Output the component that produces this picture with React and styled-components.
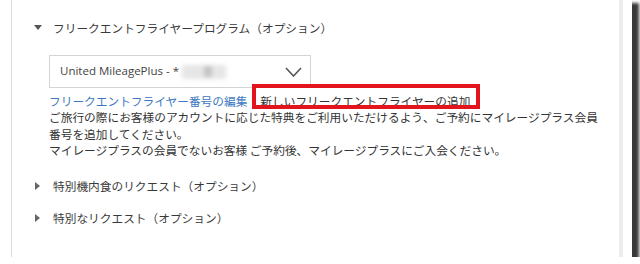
import React from "react";
import styled, { createGlobalStyle } from "styled-components";

const Global = createGlobalStyle`
  html, body { margin: 0; padding: 0; background: #ffffff; }
  body { font-family: "Noto Sans CJK JP", "Noto Sans", sans-serif; }
  * { box-sizing: border-box; }
`;

const Frame = styled.div`
  width: 632px;
  height: 257px;
  background: #ffffff;
  box-shadow: 5px 5px 3px 2px rgba(45, 45, 45, 0.95);
  overflow: hidden;
`;

const Panel = styled.div`
  margin-left: 11px;
  width: 612px;
  height: 100%;
  border-left: 1px solid #dcdcdc;
  border-right: 4px solid #ececec;
  padding: 19px 0 0 21px;
  color: #333333;
  font-size: 11.7px;
  line-height: 16.5px;
`;

const Header = styled.div`
  display: flex;
  align-items: center;
  height: 18px;
  margin-top: ${(p) => p.$top || 0}px;
`;

const Caret = styled.span`
  display: flex;
  align-items: center;
  justify-content: center;
  width: 9px;
  margin-right: 11px;
  color: #555555;
`;

const Title = styled.span`
  font-size: 11.7px;
  color: #3a3a3a;
  white-space: nowrap;
`;

const Body = styled.div`
  margin: 18px 0 0 16px;
`;

const Select = styled.div`
  width: 262px;
  height: 33px;
  border: 1px solid #d4d4d4;
  display: flex;
  align-items: center;
  padding: 0 8px 0 10px;
  font-family: "Open Sans", "Noto Sans", sans-serif;
  font-size: 11.5px;
  color: #444444;
`;

const SelectText = styled.span`
  white-space: nowrap;
`;

const Blur = styled.span`
  display: inline-flex;
  align-items: center;
  justify-content: center;
  width: 44px;
  height: 14px;
  margin-left: 3px;
  background: #e6e6e6;
  filter: blur(2px);
`;

const BlurDot = styled.span`
  width: 8px;
  height: 11px;
  margin-left: 8px;
  background: #c4c4c4;
`;

const Chevron = styled.svg`
  margin-left: auto;
  display: block;
`;

const Links = styled.div`
  display: flex;
  margin-top: 4.75px;
  white-space: nowrap;
`;

const EditLink = styled.span`
  color: #3d79c0;
`;

const AddLink = styled.span`
  position: relative;
  margin-left: 13px;
  color: #333333;
  text-decoration: underline;
  text-underline-offset: 2px;
  &::after {
    content: "";
    position: absolute;
    left: -8px;
    right: -10px;
    top: -9px;
    bottom: 0;
    border: 4px solid #e4141c;
  }
`;

const Paragraph = styled.p`
  margin: 0;
  width: 560px;
  color: #333333;
`;

export default function App() {
  const down = (
    <svg width="8" height="6" viewBox="0 0 8 6">
      <path d="M0 0 L8 0 L4 5 Z" fill="#555" />
    </svg>
  );
  const right = (
    <svg width="6" height="8" viewBox="0 0 6 8">
      <path d="M0 0 L5 4 L0 8 Z" fill="#666" />
    </svg>
  );
  return (
    <>
      <Global />
      <Frame>
        <Panel>
          <Header>
            <Caret>{down}</Caret>
            <Title>フリークエントフライヤープログラム（オプション）</Title>
          </Header>
          <Body>
            <Select>
              <SelectText>United MileagePlus - *</SelectText>
              <Blur>
                <BlurDot />
              </Blur>
              <Chevron width="17" height="10" viewBox="0 0 17 10">
                <path d="M1 1 L8.5 9 L16 1" fill="none" stroke="#555" strokeWidth="1.6" />
              </Chevron>
            </Select>
            <Links>
              <EditLink>フリークエントフライヤー番号の編集</EditLink>
              <AddLink>新しいフリークエントフライヤーの追加</AddLink>
            </Links>
            <Paragraph>
              ご旅行の際にお客様のアカウントに応じた特典をご利用いただけるよう、ご予約にマイレージプラス会員番号を追加してください。
              <br />
              マイレージプラスの会員でないお客様 ご予約後、マイレージプラスにご入会ください。
            </Paragraph>
          </Body>
          <Header $top={18}>
            <Caret>{right}</Caret>
            <Title>特別機内食のリクエスト（オプション）</Title>
          </Header>
          <Header $top={14}>
            <Caret>{right}</Caret>
            <Title>特別なリクエスト（オプション）</Title>
          </Header>
        </Panel>
      </Frame>
    </>
  );
}
